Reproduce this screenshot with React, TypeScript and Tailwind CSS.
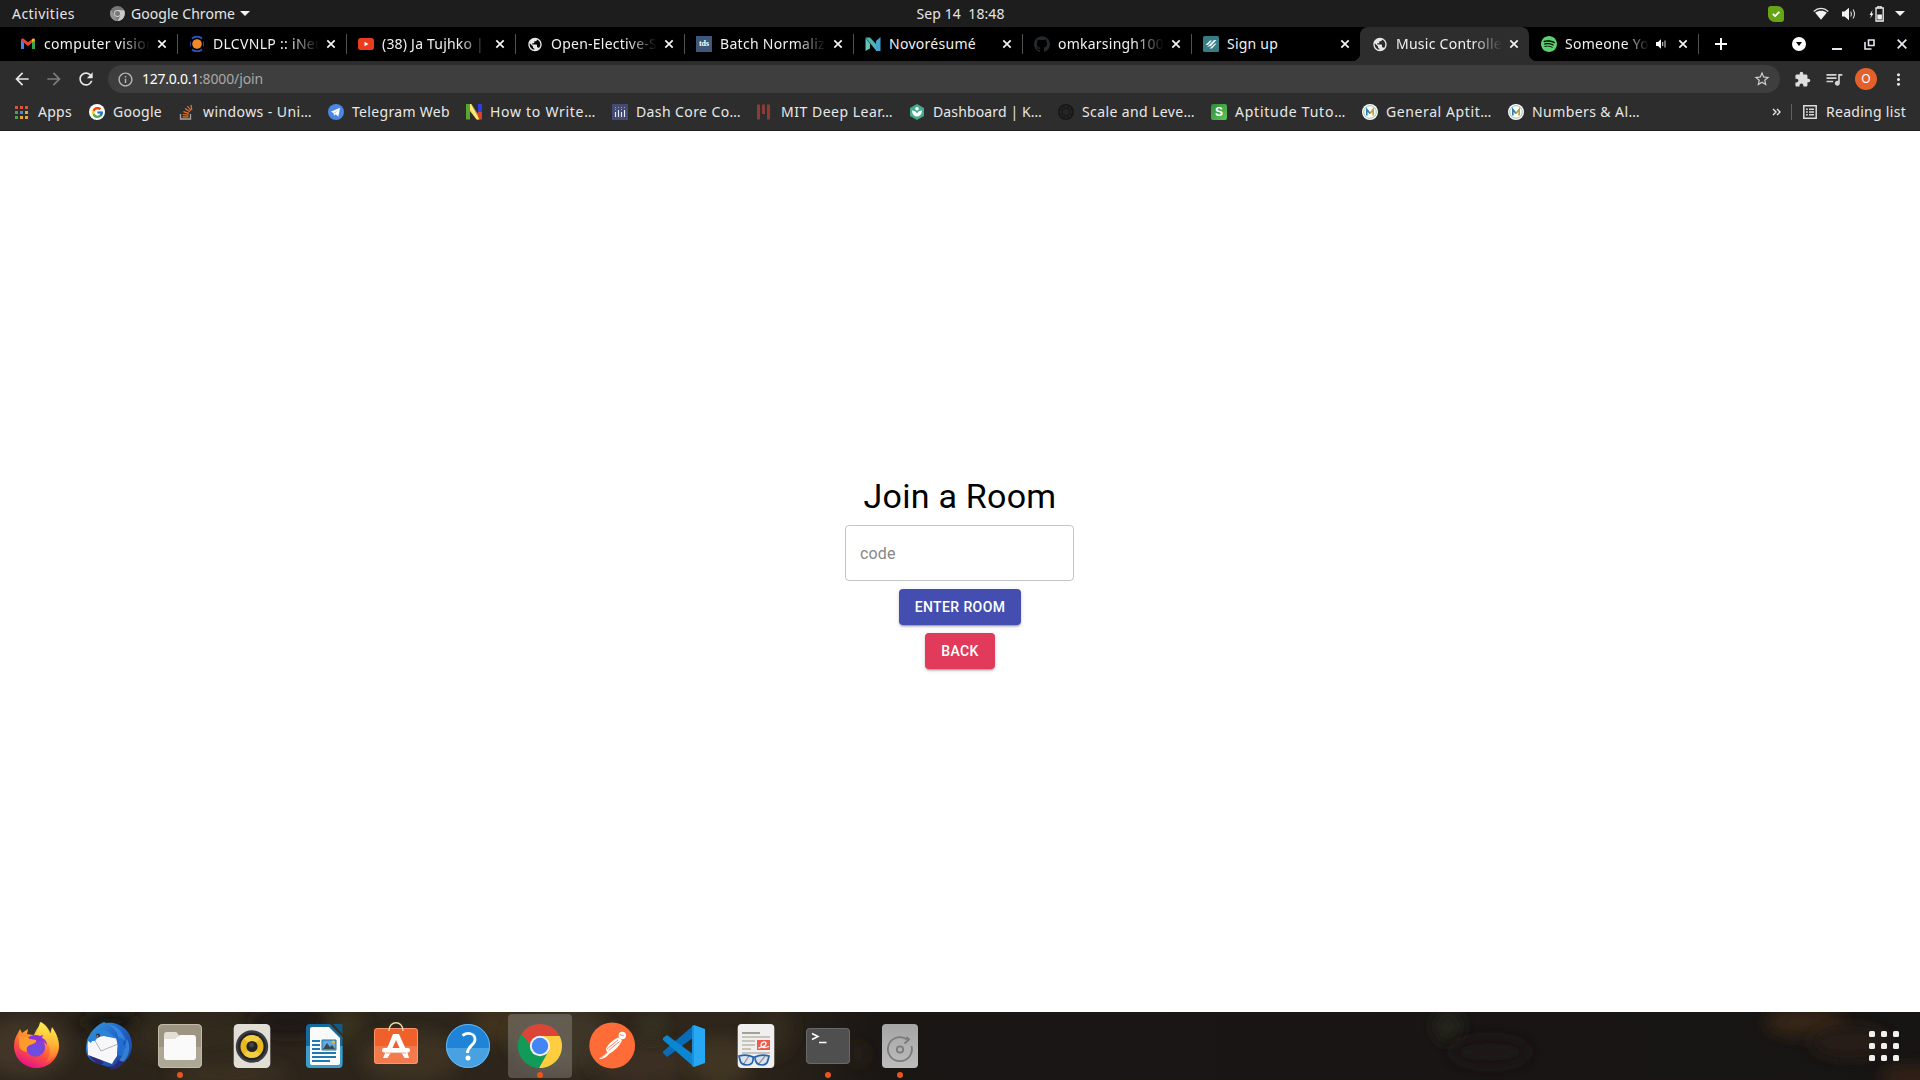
import React, { useLayoutEffect, useRef, useState } from "react";
import { SiSpotify, SiGithub } from "react-icons/si";
import { FcGoogle } from "react-icons/fc";
import {
  MdPublic,
  MdArrowBack,
  MdArrowForward,
  MdRefresh,
  MdInfoOutline,
  MdStarBorder,
  MdExtension,
  MdQueueMusic,
  MdMoreVert,
} from "react-icons/md";

/** A line of text whose tracking is adjusted so that it spans `w` pixels. */
function Label({ children, w, className = "" }: { children: string; w: number; className?: string }) {
  const ref = useRef<HTMLSpanElement>(null);
  const [ls, setLs] = useState(0);
  useLayoutEffect(() => {
    if (ref.current) {
      const natural = ref.current.getBoundingClientRect().width;
      setLs((w - natural) / children.length);
    }
  }, []);
  return (
    <span ref={ref} className={"inline-block shrink-0 whitespace-pre " + className} style={{ letterSpacing: ls }}>
      {children}
    </span>
  );
}

/* ---------- System bar ---------- */

function SystemBar() {
  return (
    <header className="grid h-[27px] grid-cols-3 items-center bg-[#1d1d1d] text-[14px] leading-none text-[#e6e6e6]">
      <div className="flex items-center pl-3">
        <Label w={63}>Activities</Label>
        <svg className="ml-[35px] size-[15px]" viewBox="0 0 16 16">
          <circle cx="8" cy="8" r="8" fill="#777" />
          <path d="M8 4.5h7A8 8 0 0 1 8 16l3.2-6z" fill="#c9c9c9" />
          <path d="M1.2 4 5 10l3 6A8 8 0 0 1 1.2 4z" fill="#929292" />
          <circle cx="8" cy="8" r="3.7" fill="#d0d0d0" />
          <circle cx="8" cy="8" r="2.7" fill="#777" />
        </svg>
        <Label w={104} className="ml-[6px]">Google Chrome</Label>
        <Caret className="ml-[5px]" />
      </div>
      <div className="flex justify-center pl-px">
        <Label w={88}>Sep 14  18:48</Label>
      </div>
      <div className="flex items-center justify-end pr-[15px]">
        <svg className="size-4" viewBox="0 0 16 16">
          <path d="M3 0h6c4 0 7 3 7 7v6c0 2-1 3-3 3H7c-4 0-7-3-7-7V3c0-2 1-3 3-3z" fill="#67a516" />
          <path d="m4.8 7.8 2.3 2.3 4.2-4.2" fill="none" stroke="#fff" strokeWidth="1.8" />
        </svg>
        <svg className="ml-[29px] h-[14px] w-4" viewBox="0 0 16 14">
          <path d="M.7 4.5C5 .4 11 .4 15.3 4.5" fill="none" stroke="#e8e8e8" strokeWidth="1.2" />
          <path d="M2.2 5.8C5.8 3.2 10.2 3.2 13.8 5.8L8 12.8z" fill="#f2f2f2" />
        </svg>
        <svg className="ml-3 h-[14px] w-4" viewBox="0 0 16 14">
          <path d="M1 4.5h2.5L8 .8v12.4L3.5 9.5H1z" fill="#f2f2f2" />
          <path d="M9.7 4.5q1.600 2.500 0 5M12 2.500q3 4.500 0 9" fill="none" stroke="#e0e0e0" strokeWidth="1.1" />
        </svg>
        <svg className="ml-3 h-4 w-[15px]" viewBox="0 0 15 16">
          <path d="M3.5 4 .5 9h1.700l-1 3.500L4.500 7.500H2.800z" fill="#f2f2f2" />
          <path d="M7 2h7.200v13H7zM9 0h3v2H9z" fill="none" stroke="#f2f2f2" strokeWidth="1.3" />
          <path d="M8.300 8.500h4.600v5H8.300z" fill="#f2f2f2" />
        </svg>
        <Caret className="ml-[11px]" />
      </div>
    </header>
  );
}

function Caret({ className = "" }: { className?: string }) {
  return (
    <svg className={"h-[5px] w-[10px] " + className} viewBox="0 0 10 5">
      <path d="M0 0h10L5 5z" fill="#f2f2f2" />
    </svg>
  );
}

/* ---------- Tabs ---------- */

type Tab = { icon: React.ReactNode; title: string; w: number; active?: boolean; audio?: boolean; noLine?: boolean };

const tabs: Tab[] = [
  {
    icon: (
      <svg viewBox="0 0 16 16" className="size-4">
        <path d="M1 4v9h3V6.500L1 4z" fill="#4285f4" />
        <path d="M15 4v9h-3V6.500L15 4z" fill="#34a853" />
        <path d="M1 4.200V4c0-1.600 1.600-2 2.600-1.200L8 6.200l4-3v3.600L8 9.900 4 6.800z" fill="#ea4335" />
        <path d="m12 3.200.6-.4C13.600 2 15 2.500 15 4v.500l-3 2.300z" fill="#fbbc04" />
      </svg>
    ),
    title: "computer vision",
    w: 111,
  },
  {
    icon: (
      <svg viewBox="0 0 16 16" className="size-4">
        <circle cx="8" cy="8" r="4.800" fill="#f0892a" />
        <path d="M3 2.500Q8-1.500 13 2.500M3 13.500q5 4 10 0" fill="none" stroke="#2b55c4" strokeWidth="1.800" />
        <path d="M1.600 5.500v5M14.400 5.500v5" stroke="#2b4ba0" strokeWidth="1" />
      </svg>
    ),
    title: "DLCVNLP :: iNeu",
    w: 111,
  },
  {
    icon: (
      <svg viewBox="0 0 16 16" className="size-4">
        <rect y="2" width="16" height="12" rx="2.800" fill="#ea3b1c" />
        <path d="M6.500 5.700v4.600l4-2.300z" fill="#fff" />
      </svg>
    ),
    title: "(38) Ja Tujhko |",
    w: 102,
  },
  { icon: <MdPublic className="size-[17px] text-[#e8e8e8]" />, title: "Open-Elective-S", w: 106 },
  {
    icon: (
      <span className="flex size-4 items-center justify-center bg-[#3d5878] font-['Liberation_Serif'] text-[8px] leading-none font-bold text-white">
        tds
      </span>
    ),
    title: "Batch Normaliz",
    w: 105,
  },
  {
    icon: (
      <svg viewBox="0 0 16 16" className="size-4">
        <path d="M.5 1.500 5 1.500l6 6.500v6.500z" fill="#4eb5b5" />
        <path d="M.5 2 5 7.500v5L.5 15z" fill="#66c3b7" />
        <path d="M15.500 1v14H11V5z" fill="#45a4cf" />
      </svg>
    ),
    title: "Novorésumé",
    w: 87,
  },
  { icon: <SiGithub className="size-4 text-[#24292e]" />, title: "omkarsingh100", w: 106 },
  {
    icon: (
      <svg viewBox="0 0 16 16" className="size-4">
        <rect width="16" height="16" rx="1.500" fill="#377c84" />
        <path d="m2.500 9 4.500-4.500h2L5 9zM4 11l7-7h2.500L8 10zM6.500 12.500 12 7.500h1.500l-4.500 5z" fill="#e6f2f2" />
      </svg>
    ),
    title: "Sign up",
    w: 51,
    noLine: true,
  },
  { icon: <MdPublic className="size-[17px] text-[#e8e8e8]" />, title: "Music Controlle", w: 106, active: true, noLine: true },
  { icon: <SiSpotify className="size-4 text-[#5bd06c]" />, title: "Someone Yo", w: 84, audio: true },
];

function TabStrip() {
  return (
    <div className="flex h-[34px] items-center bg-black pl-2 text-[14px] leading-none text-[#f0f0f0]">
      {tabs.map((t) => (
        <div
          key={t.title}
          className={
            "relative flex h-full w-[169px] shrink-0 items-center pl-3 " +
            (t.active ? "rounded-t-[8px] bg-[#2d2d2d]" : "")
          }
        >
          {t.active && (
            <>
              <span className="absolute bottom-0 -left-2 size-2 bg-[radial-gradient(circle_at_0_0,black_8px,#2d2d2d_8.5px)]" />
              <span className="absolute -right-2 bottom-0 size-2 bg-[radial-gradient(circle_at_100%_0,black_8px,#2d2d2d_8.5px)]" />
            </>
          )}
          <span className="flex size-4 shrink-0 items-center justify-center">{t.icon}</span>
          <span
            className={
              "ml-2 shrink-0 overflow-hidden py-1 " +
              (t.audio ? "w-[84px]" : "w-[106px]") +
              (t.w > 90 || t.audio ? " [mask-image:linear-gradient(to_right,black_72%,transparent)]" : "")
            }
          >
            <Label w={t.w}>{t.title}</Label>
          </span>
          {t.audio && (
            <svg viewBox="0 0 10 10" className="ml-[7px] size-[10px]">
              <path d="M0 3h2l3-2.700v9.400L2 7H0z" fill="#fff" />
              <path d="M6.700 3v4M9 1.500v7" stroke="#ddd" strokeWidth="1" />
            </svg>
          )}
          <svg viewBox="0 0 10 10" className={"size-[10px] shrink-0 " + (t.audio ? "ml-[12px]" : "ml-[7px]")}>
            <path d="m1.300 1.300 7.400 7.400m0-7.400L1.300 8.700" stroke="#f4f4f4" strokeWidth="1.700" />
          </svg>
          {!t.noLine && <span className="-mr-px ml-auto h-5 w-px bg-[#505050]" />}
        </div>
      ))}
      <svg viewBox="0 0 12 12" className="ml-[17px] size-3">
        <path d="M6 0v12M0 6h12" stroke="#fff" strokeWidth="2" />
      </svg>
      <div className="ml-auto flex items-center pr-[13px]">
        <svg viewBox="0 0 14 14" className="size-[14px]">
          <circle cx="7" cy="7" r="7" fill="#fff" />
          <path d="M4 5h6L7 9z" fill="#000" />
        </svg>
        <span className="mt-[9px] ml-[26px] h-[2px] w-[10px] bg-[#e6e6f0]" />
        <svg viewBox="0 0 11 11" className="ml-[22px] size-[11px]">
          <path d="M4.500 1h5.500v5.500H4.500z" fill="none" stroke="#e6e6f0" strokeWidth="1.600" />
          <path d="M1 3v7h6.500" fill="none" stroke="#e6e6f0" strokeWidth="1.600" />
        </svg>
        <svg viewBox="0 0 10 10" className="ml-[22px] size-[10px]">
          <path d="m.7.7 8.600 8.600m0-8.600L.7 9.300" stroke="#e6e6f0" strokeWidth="1.800" />
        </svg>
      </div>
    </div>
  );
}

/* ---------- Toolbar ---------- */

function Toolbar() {
  return (
    <div className="flex h-9 items-center bg-[#2d2d2d] pl-3">
      <MdArrowBack className="size-5 text-[#e6e6e6]" />
      <MdArrowForward className="ml-3 size-5 text-[#7c7c7c]" />
      <MdRefresh className="ml-3 size-5 text-[#e6e6e6]" />
      <div className="ml-3 flex h-7 w-[1672px] items-center rounded-full bg-[#3e3e3e] pr-[9px] pl-[9px] text-[14px] leading-none">
        <MdInfoOutline className="size-[17px] text-[#b8b8b8]" />
        <Label w={57} className="ml-2 text-white">127.0.0.1</Label>
        <Label w={64} className="text-[#a8a8a8]">:8000/join</Label>
        <MdStarBorder className="ml-auto size-[18px] text-[#cfcfcf]" />
      </div>
      <MdExtension className="ml-[14px] size-[17px] text-[#dedede]" />
      <MdQueueMusic className="ml-[13px] size-5 text-[#d4d4d4]" />
      <span className="ml-[11px] flex size-[22px] items-center justify-center rounded-full bg-[#e4602b] text-[12px] text-white">
        O
      </span>
      <MdMoreVert className="ml-3 size-[19px] text-[#e6e6e6]" />
    </div>
  );
}

/* ---------- Bookmarks ---------- */

const appDots = ["#e0503c", "#e0503c", "#e0503c", "#4aa05a", "#4a86e8", "#e8a531", "#4aa05a", "#e8a531", "#e8a531"];

const mBadge = (
  <svg viewBox="0 0 16 16" className="size-4">
    <circle cx="8" cy="8" r="8" fill="#fff" />
    <circle cx="8" cy="8" r="6.300" fill="none" stroke="#88b8a8" strokeWidth=".9" />
    <path d="M4.800 11.500v-6L8 9.500" fill="none" stroke="#2f7fb0" strokeWidth="1.700" />
    <path d="m8 9.500 3.200-4v6" fill="none" stroke="#b9a23c" strokeWidth="1.700" />
  </svg>
);

const bookmarks: { icon: React.ReactNode; text: string; w: number }[] = [
  {
    icon: (
      <span className="ml-[1px] grid grid-cols-3 gap-[2px]">
        {appDots.map((c, i) => (
          <span key={i} className="size-[3px]" style={{ background: c }} />
        ))}
      </span>
    ),
    text: "Apps",
    w: 34,
  },
  {
    icon: (
      <span className="flex size-4 items-center justify-center rounded-full bg-white">
        <FcGoogle className="size-[13px]" />
      </span>
    ),
    text: "Google",
    w: 49,
  },
  {
    icon: (
      <svg viewBox="0 0 16 16" className="size-4">
        <path d="M1.500 10v5h10v-5" fill="none" stroke="#a5a5a5" strokeWidth="1.300" />
        <path
          d="M3.500 12.800h6M3.600 10.500l6 .6M4.400 7.700l5.600 1.600M6 4.500l5 3.200M8.500 2l3.500 4.700M12 .8l.8 5"
          stroke="#e5752c"
          strokeWidth="1.200"
        />
      </svg>
    ),
    text: "windows - Uni…",
    w: 109,
  },
  {
    icon: (
      <svg viewBox="0 0 16 16" className="size-4">
        <circle cx="8" cy="8" r="8" fill="#4d87e5" />
        <path d="m2.800 7.800 9.200-4-1.600 8.700-3-2.200-1.400 1.500-.4-2.700z" fill="#fff" />
        <path d="m5.800 9 4.400-3.200-3 3.800" fill="#b5cdf2" />
      </svg>
    ),
    text: "Telegram Web",
    w: 98,
  },
  {
    icon: (
      <svg viewBox="0 0 16 16" className="size-4">
        <path d="M0 0h4v15.500H0z" fill="#5aa532" />
        <path d="M12 0h4v8h-4z" fill="#2d3fe0" />
        <path d="M12 8h4v7.500h-4z" fill="#d8402c" />
        <path d="M4 0h1l8.500 15.500h-3L4 7z" fill="#fbe04a" />
        <path d="M4 0h1.500L12 10v5.500h-1L4 4z" fill="#fdf3b0" opacity=".5" />
      </svg>
    ),
    text: "How to Write…",
    w: 106,
  },
  {
    icon: (
      <svg viewBox="0 0 16 16" className="size-4">
        <path d="M0 0h16v16H0z" fill="#434b73" />
        <path d="M3.500 8v5M6.500 6v7M9.500 8v5M12.500 6v7" stroke="#e8eaf5" strokeWidth="1.100" />
        <path d="M3.500 3v4M6.500 3v2M9.500 3v4M12.500 3v2" stroke="#75b5d0" strokeWidth="1" strokeDasharray="1 1" />
      </svg>
    ),
    text: "Dash Core Co…",
    w: 105,
  },
  {
    icon: (
      <svg viewBox="0 0 16 16" className="size-4">
        <path d="M0 .5h3v15H0zM5 .5h3v9.500H5zM10 .5h3v15h-3z" fill="#8f3a32" />
      </svg>
    ),
    text: "MIT Deep Lear…",
    w: 112,
  },
  {
    icon: (
      <svg viewBox="0 0 16 16" className="size-4">
        <path d="m8 0 7 4v8l-7 4-7-4V4z" fill="#46ab8c" />
        <circle cx="8" cy="4.800" r="1.800" fill="#fff" />
        <path d="M3 6.500c2.500 0 4 1 5 3 1-2 2.500-3 5-3-.2 3.500-2 6-5 6s-4.800-2.500-5-6z" fill="#fff" />
      </svg>
    ),
    text: "Dashboard | K…",
    w: 109,
  },
  {
    icon: (
      <svg viewBox="0 0 16 16" className="size-4" fill="none" stroke="#303030" strokeWidth=".6">
        <circle cx="8" cy="8" r="8" fill="#171717" stroke="none" />
        <circle cx="8" cy="8" r="5.500" />
        <circle cx="8" cy="8" r="2.500" />
        <path d="M8 1v14M1 8h14M3 3l10 10M13 3 3 13" />
      </svg>
    ),
    text: "Scale and Leve…",
    w: 113,
  },
  {
    icon: (
      <span className="flex size-4 items-center justify-center rounded-[2px] bg-[linear-gradient(135deg,#2f8a3a,#5cc85a)] font-['Liberation_Sans'] text-[12px] leading-none font-bold text-white">
        S
      </span>
    ),
    text: "Aptitude Tuto…",
    w: 111,
  },
  { icon: mBadge, text: "General Aptit…", w: 106 },
  { icon: mBadge, text: "Numbers & Al…", w: 108 },
];

function BookmarkBar() {
  return (
    <div className="flex h-[34px] items-center border-b border-[#1e1e1e] bg-[#2d2d2d] pb-[3px] pl-[14px] text-[14px] leading-none text-[#e8e8e8]">
      <div className="flex gap-4">
        {bookmarks.map((b, i) => (
          <div key={b.text} className={"flex items-center gap-2 " + (i < 2 ? "mr-px" : "")}>
            <span className="flex size-4 shrink-0 items-center">{b.icon}</span>
            <Label w={b.w}>{b.text}</Label>
          </div>
        ))}
      </div>
      <div className="ml-auto flex items-center pr-[14px]">
        <svg viewBox="0 0 9 8" className="h-2 w-[9px]">
          <path d="m1 1 3 3-3 3M5 1l3 3-3 3" fill="none" stroke="#e8e8e8" strokeWidth="1.400" />
        </svg>
        <span className="ml-[10px] h-4 w-px bg-[#606060]" />
        <svg viewBox="0 0 14 14" className="ml-[11px] size-[14px]">
          <path d="M.8.8h12.400v12.400H.8z" fill="none" stroke="#dcdcdc" strokeWidth="1.500" />
          <path d="M3 4.200h1.800M3 7h1.800M3 9.800h1.800M6 4.200h5M6 7h5M6 9.800h5" stroke="#dcdcdc" strokeWidth="1.500" />
        </svg>
        <Label w={80} className="ml-[9px]">Reading list</Label>
      </div>
    </div>
  );
}

/* ---------- Page ---------- */

const shadow =
  "shadow-[0_3px_1px_-2px_rgba(0,0,0,0.2),0_2px_2px_0_rgba(0,0,0,0.14),0_1px_5px_0_rgba(0,0,0,0.12)]";

function JoinRoom() {
  return (
    <main className="flex min-h-0 flex-1 flex-col items-center justify-center gap-2 bg-white pt-px font-[Roboto]">
      <h4 className="text-[34px] leading-[42px] tracking-[0.25px] text-black">Join a Room</h4>
      <input
        className="mr-px h-14 w-[229px] rounded-[4px] border border-black/23 px-[14px] text-[16px] tracking-[0.15px] outline-none placeholder:text-[#878787]"
        placeholder="code"
      />
      <button
        className={"h-[36px] rounded-[4px] bg-[#434eb0] px-4 text-[14px] font-medium tracking-[0.4px] text-white " + shadow}
      >
        ENTER ROOM
      </button>
      <button
        className={"h-[36px] rounded-[4px] bg-[#e23a5a] px-4 text-[14px] font-medium tracking-[0.4px] text-white " + shadow}
      >
        BACK
      </button>
    </main>
  );
}

/* ---------- Dock ---------- */

const Firefox = () => (
  <svg viewBox="0 0 48 48" className="size-12">
    <defs>
      <linearGradient id="ff1" x1=".8" y1="0" x2=".35" y2="1">
        <stop offset="0" stopColor="#fff44f" />
        <stop offset=".35" stopColor="#ffa52e" />
        <stop offset=".65" stopColor="#ff5638" />
        <stop offset="1" stopColor="#e5128a" />
      </linearGradient>
      <radialGradient id="ff2" cx=".5" cy=".7" r=".7">
        <stop offset="0" stopColor="#5f55e8" />
        <stop offset="1" stopColor="#9a35cf" />
      </radialGradient>
      <linearGradient id="ff3" x1="0" y1="0" x2="0" y2="1">
        <stop offset="0" stopColor="#fff04c" />
        <stop offset="1" stopColor="#ff9a2c" stopOpacity=".3" />
      </linearGradient>
    </defs>
    <path
      d="M28 0c5 3 8 7 10 12l2-7c4 6 7 12 7 19 0 12-10 22-22.500 22S2 36 2 24c0-6 2-10 4-13l2-4 2 4 6-4-1 5 6 1c5-1 6-9 7-13z"
      fill="url(#ff1)"
    />
    <path d="M29 0c5 3 9 8 10 13l1.500-7c4 6 7 13 6 20-2 9-8 13-13 14 5-6 6-13 2-18-4-4-12-4-13-9 0-4 4-7 6.500-13z" fill="url(#ff3)" />
    <circle cx="23.500" cy="25" r="9.700" fill="url(#ff2)" />
    <path d="M15 17c3-4 9-5 13-3l3-1-1 3c3 1 5 4 5 7-3-4-6-5-9-4z" fill="#8b35d6" />
    <path d="M7 14c4-1 8 0 11 3l6 1c1 2-2 4-6 5-3 1-4 4-3 7-6-1-8-4-8-8z" fill="#ff9a2c" />
  </svg>
);

const Thunderbird = () => (
  <svg viewBox="0 0 48 48" className="size-12">
    <defs>
      <linearGradient id="tb" x1="0" y1="0" x2="1" y2="1">
        <stop offset="0" stopColor="#35a0dd" />
        <stop offset=".5" stopColor="#2160c8" />
        <stop offset="1" stopColor="#1b3f91" />
      </linearGradient>
    </defs>
    <path
      d="M2 25c1-3 0-7 3-11C8 8 13 3 20 0l2 1c11-2 26 6 26 22 0 9-5 16-12 20l-4 1-8 1-8-3C7 40 1 34 2 25z"
      fill="url(#tb)"
    />
    <path d="M22 2c8 3 12 8 12 14l8 3c-3-9-9-16-20-17zM43 17c3 5 3 12 0 18-3 5-7 8-11 9l6-10z" fill="#3c96e6" opacity=".7" />
    <path d="M4 32c3 5 7 8 12 11l4-2-8-8zM26 46c4-2 6-4 8-8l6 2c-3 5-8 8-14 7z" fill="#2b2a79" />
    <path d="m4 19 3 2 3-6 10-1 12 2 2 8-1 10c-2 3-3 4-5 8L4 33c0-5-1-9 0-14z" fill="#f7f7f9" />
    <path d="m10 17 7 12 17-7" fill="none" stroke="#aaa" strokeWidth=".9" />
    <path d="m34 15 6 2-1 6 4 1-3 4-2 6-5-1z" fill="#246dd0" />
    <path d="M7 19C8 13 12 7 20 8c6 1 8 6 14 9l-13-3c-6 0-8 2-10 5z" fill="#2a83d8" />
    <circle cx="14" cy="13.500" r="2" fill="#273046" />
    <circle cx="13.500" cy="14" r=".9" fill="#d97a3a" />
  </svg>
);

const Files = () => (
  <svg viewBox="0 0 48 48" className="size-12">
    <rect x="2" y="2" width="44" height="44" rx="4.500" fill="#9d9581" />
    <path d="M2 25h44v16.500a4.500 4.500 0 0 1-4.500 4.500h-35A4.500 4.500 0 0 1 2 41.500z" fill="#ada796" />
    <rect x="2.500" y="2.500" width="43" height="43" rx="4" fill="none" stroke="#c1bba9" />
    <path d="M8 17v-4c0-2 1-3 2.500-3h8c1.500 0 2.500 0 3 1.500l1.500 2V18z" fill="#e3dfd6" />
    <path d="M8 17h11l5-4h13c2 0 3 1 3 3v19c0 2-1 3-3 3H11c-2 0-3-1-3-3z" fill="#fafafa" />
  </svg>
);

const Rhythmbox = () => (
  <svg viewBox="0 0 48 48" className="size-12">
    <rect x="5.700" y="2" width="36.600" height="44" rx="4.500" fill="#e1ded5" />
    <circle cx="24" cy="24.500" r="16.200" fill="#3a3c40" />
    <circle cx="24" cy="24.500" r="13.800" fill="#222428" />
    <circle cx="24" cy="24.500" r="11.500" fill="#e9b91d" />
    <path d="m24 24.500-8-8a11.500 11.500 0 0 1 16 0zM24 24.500l8 8a11.500 11.500 0 0 1-16 0z" fill="#f2cf43" />
    <circle cx="24" cy="24.500" r="5.600" fill="#242424" />
    <circle cx="23.500" cy="23" r="2.500" fill="#444" />
  </svg>
);

const Writer = () => (
  <svg viewBox="0 0 48 48" className="size-12">
    <path d="M10 2h20l12.500 13v27a4 4 0 0 1-4 4H10a4 4 0 0 1-4-4V6a4 4 0 0 1 4-4z" fill="#15699c" />
    <path d="M6 24h36.500v18a4 4 0 0 1-4 4H10a4 4 0 0 1-4-4z" fill="#3c9ccb" />
    <path d="M33 2h8.500c.7 0 1 .4 1 1v9z" fill="#125b87" />
    <path d="M12 5h17l11 11v25a2 2 0 0 1-2 2H12a2 2 0 0 1-2-2V7a2 2 0 0 1 2-2z" fill="#fafafa" />
    <path d="M12 19h8M12 23h8M12 27h8M12 31h24M12 35h24M12 39h18" stroke="#1f78b0" strokeWidth="1.900" />
    <path d="M22 18h14v10H22z" fill="#62aadf" stroke="#2273a6" strokeWidth="1" />
    <path d="m23 27 4-6 3 4 2-2 3 4z" fill="#3e4a50" />
    <circle cx="33.500" cy="20" r="1.500" fill="#f3bf2b" />
  </svg>
);

const Software = () => (
  <svg viewBox="0 0 48 48" className="size-12">
    <rect x="2" y="6" width="44" height="36" rx="3.500" fill="#f0602a" />
    <path d="M2 24h44v14.500a3.500 3.500 0 0 1-3.500 3.500h-37A3.500 3.500 0 0 1 2 38.500z" fill="#f37a4d" />
    <rect x="2.500" y="6.500" width="43" height="35" rx="3" fill="none" stroke="#fa966d" />
    <path d="M17 9c0-11 14-11 14 0" fill="none" stroke="#e8d9a5" strokeWidth="1.500" />
    <path d="M21 12h6l8.500 19 1.500 5h-4.500l-3-5h-11l-3 5H11l3-7z" fill="#fff" />
    <path d="m24 18 3.500 8H20.500z" fill="#f0602a" />
    <rect x="10" y="26" width="28" height="4.500" rx="2.200" fill="#fff" />
    <path d="M14 31h20" stroke="#e98a67" strokeWidth=".8" />
  </svg>
);

const Help = () => (
  <svg viewBox="0 0 48 48" className="size-12">
    <circle cx="24" cy="24" r="22" fill="#1f83d8" />
    <path d="M2.100 26h43.800a22 22 0 0 1-43.800 0z" fill="#48a2e2" />
    <circle cx="24" cy="24" r="21.500" fill="none" stroke="#65b5ee" />
    <path d="M18.500 13.500c5-3.500 12.500-2.500 12.500 4 0 6-7.500 6-7.500 13.500" fill="none" stroke="#fff" strokeWidth="2.800" />
    <circle cx="24" cy="36" r="2.500" fill="#fff" />
  </svg>
);

const Chrome = () => (
  <svg viewBox="0 0 48 48" className="size-12">
    <circle cx="24" cy="24" r="22" fill="#129b58" />
    <path d="M24 14h19.600A22 22 0 0 1 23 46l9.700-17z" fill="#ffcd40" />
    <path d="M5.500 12.200A22 22 0 0 1 43.600 14H24c-6 0-9 4-9.500 9z" fill="#db4437" />
    <path d="M5.500 12.200 15 28.500l9 6 4.500-1.300L23 46A22 22 0 0 1 5.500 12.200z" fill="#129b58" />
    <circle cx="24" cy="24" r="10.200" fill="#f1f1f1" />
    <circle cx="24" cy="24" r="8.200" fill="#4285f4" />
  </svg>
);

const Postman = () => (
  <svg viewBox="0 0 48 48" className="size-12">
    <circle cx="24.200" cy="23.500" r="22.900" fill="#ff6c37" />
    <circle cx="34.300" cy="13.500" r="3.700" fill="#fff" />
    <path d="M30.500 15.500c-5 2-10 6-12.500 11l1 4-8 6.500c4 0 8-2 10-5 5-3 11-8 13-14z" fill="#fff" />
    <path d="m32 12.500 4 1.500M30 18l-11 9M31.500 19.500l-11 9M19.500 30l-6 6" stroke="#ff6c37" strokeWidth=".8" />
  </svg>
);

const VSCode = () => (
  <svg viewBox="0 0 48 48" className="size-12">
    <path d="m3 31 4 4L34 15V3L3 29.500z" fill="#0a6cb8" />
    <path d="m3 16 4-3 27 20v12L3 18z" fill="#0b87d2" />
    <path d="m34 3 11 4v34l-11 4z" fill="#27a8f5" />
    <path d="M34 3v42l-2-1V4z" fill="#1f8fd9" />
  </svg>
);

const Evince = () => (
  <svg viewBox="0 0 48 48" className="size-12">
    <rect x="5.700" y="2" width="36.600" height="44" rx="4" fill="#efefef" />
    <path d="M10 11h18" stroke="#a79f91" strokeWidth="2" />
    <path d="M10 15h28M10 19h13M10 23h13M10 27h9M10 31h28" stroke="#c8c4b8" strokeWidth="2" />
    <path d="M25 18h13v10H25z" fill="#f05a4a" />
    <path d="M26.500 26c5-1 8-3 7.500-5s-5-1-5 2 4 3 8 1.500" fill="none" stroke="#fff" strokeWidth="1.300" />
    <path d="m11 43 6-9M26 43l7-9" stroke="#777" strokeWidth="1.300" />
    <path
      d="M7 34q8-2 14 1 1 8-6 8-6 0-7-5zM23 35q6-3 14-1l-1 4q-1 5-6 5-7 0-7-8zM20 35h4"
      fill="#b8cce0"
      fillOpacity=".35"
      stroke="#2463b0"
      strokeWidth="1.700"
    />
  </svg>
);

const Terminal = () => (
  <svg viewBox="0 0 48 48" className="size-12">
    <rect x="2" y="6" width="44" height="36" rx="4" fill="#4f4f4f" />
    <rect x="2.500" y="6.500" width="43" height="35" rx="3.500" fill="none" stroke="#686868" />
    <path d="m8 11.500 6 3-6 3M15 20.500h7.500" fill="none" stroke="#fff" strokeWidth="1.500" />
  </svg>
);

const Disks = () => (
  <svg viewBox="0 0 48 48" className="size-12">
    <defs>
      <linearGradient id="dk" x1="0" y1="0" x2="0" y2="1">
        <stop offset="0" stopColor="#a5a5a5" />
        <stop offset="1" stopColor="#bdbdbd" />
      </linearGradient>
    </defs>
    <rect x="6" y="2" width="36" height="44" rx="4" fill="url(#dk)" />
    <g fill="none" stroke="#7b7b7b" strokeWidth="1.800">
      <path d="M35.500 24a12 12 0 1 1-5.500-7.200l-1 .2M28.500 21.500l4.500-4-2.500-2.500" />
      <circle cx="24" cy="27.500" r="3.200" />
    </g>
  </svg>
);

const dock: { name: string; icon: React.ReactNode; running?: boolean; focused?: boolean }[] = [
  { name: "firefox", icon: <Firefox /> },
  { name: "thunderbird", icon: <Thunderbird /> },
  { name: "files", icon: <Files />, running: true },
  { name: "rhythmbox", icon: <Rhythmbox /> },
  { name: "writer", icon: <Writer /> },
  { name: "software", icon: <Software /> },
  { name: "help", icon: <Help /> },
  { name: "chrome", icon: <Chrome />, running: true, focused: true },
  { name: "postman", icon: <Postman /> },
  { name: "vscode", icon: <VSCode /> },
  { name: "evince", icon: <Evince /> },
  { name: "terminal", icon: <Terminal />, running: true },
  { name: "disks", icon: <Disks />, running: true },
];

/* cx, cy, rx, ry, colour */
const blobs: [number, number, number, number, string][] = [
  [25, 35, 45, 30, "#3f3427"],
  [110, 10, 30, 10, "#15130f"],
  [190, 25, 60, 22, "#332a1e"],
  [230, 62, 60, 10, "#3d3120"],
  [290, 10, 40, 14, "#1e1912"],
  [345, 14, 18, 18, "#38321c"],
  [410, 45, 50, 26, "#3c3120"],
  [500, 12, 30, 18, "#40321b"],
  [560, 25, 50, 34, "#3d3428"],
  [640, 50, 50, 22, "#3a2f20"],
  [652, 14, 12, 12, "#343423"],
  [720, 50, 30, 24, "#3f3422"],
  [775, 18, 18, 26, "#33291c"],
  [858, 42, 8, 10, "#2a2214"],
  [1448, 14, 13, 16, "#28271f"],
  [1490, 40, 40, 14, "#1c1814"],
  [1805, 10, 40, 14, "#382816"],
  [1850, 30, 40, 16, "#281e15"],
  [1910, 66, 30, 12, "#352214"],
];

function Dock() {
  return (
    <footer className="relative flex h-[68px] items-center justify-between overflow-hidden bg-[linear-gradient(to_right,#2b241b,#2e261b_38%,#1a1614_46%,#171514)] pr-[21px] pl-1">
      <svg className="absolute inset-0 h-full w-full" viewBox="0 0 1920 68" preserveAspectRatio="none">
        <defs>
          <filter id="soft" x="-100%" y="-200%" width="300%" height="500%">
            <feGaussianBlur stdDeviation="8" />
          </filter>
        </defs>
        {blobs.map(([cx, cy, rx, ry, c], i) => (
          <ellipse key={i} cx={cx} cy={cy} rx={rx} ry={ry} fill={c} filter="url(#soft)" />
        ))}
      </svg>
      <div className="relative flex gap-2">
        {dock.map((d) => (
          <div
            key={d.name}
            className={"relative flex size-16 items-center justify-center rounded-[4px] " + (d.focused ? "bg-white/20" : "")}
          >
            {d.icon}
            {d.running && <span className="absolute bottom-0 left-[29px] size-[6px] rounded-full bg-[#e95420]" />}
          </div>
        ))}
      </div>
      <div className="relative grid grid-cols-3 gap-[6px]">
        {Array.from({ length: 9 }, (_, i) => (
          <span key={i} className="size-[6px] rounded-[1.5px] bg-[#f0f0ee]" />
        ))}
      </div>
    </footer>
  );
}

export default function App() {
  return (
    <div className="flex h-[1080px] w-[1920px] flex-col overflow-hidden font-['Noto_Sans',sans-serif]">
      <SystemBar />
      <TabStrip />
      <Toolbar />
      <BookmarkBar />
      <JoinRoom />
      <Dock />
    </div>
  );
}
